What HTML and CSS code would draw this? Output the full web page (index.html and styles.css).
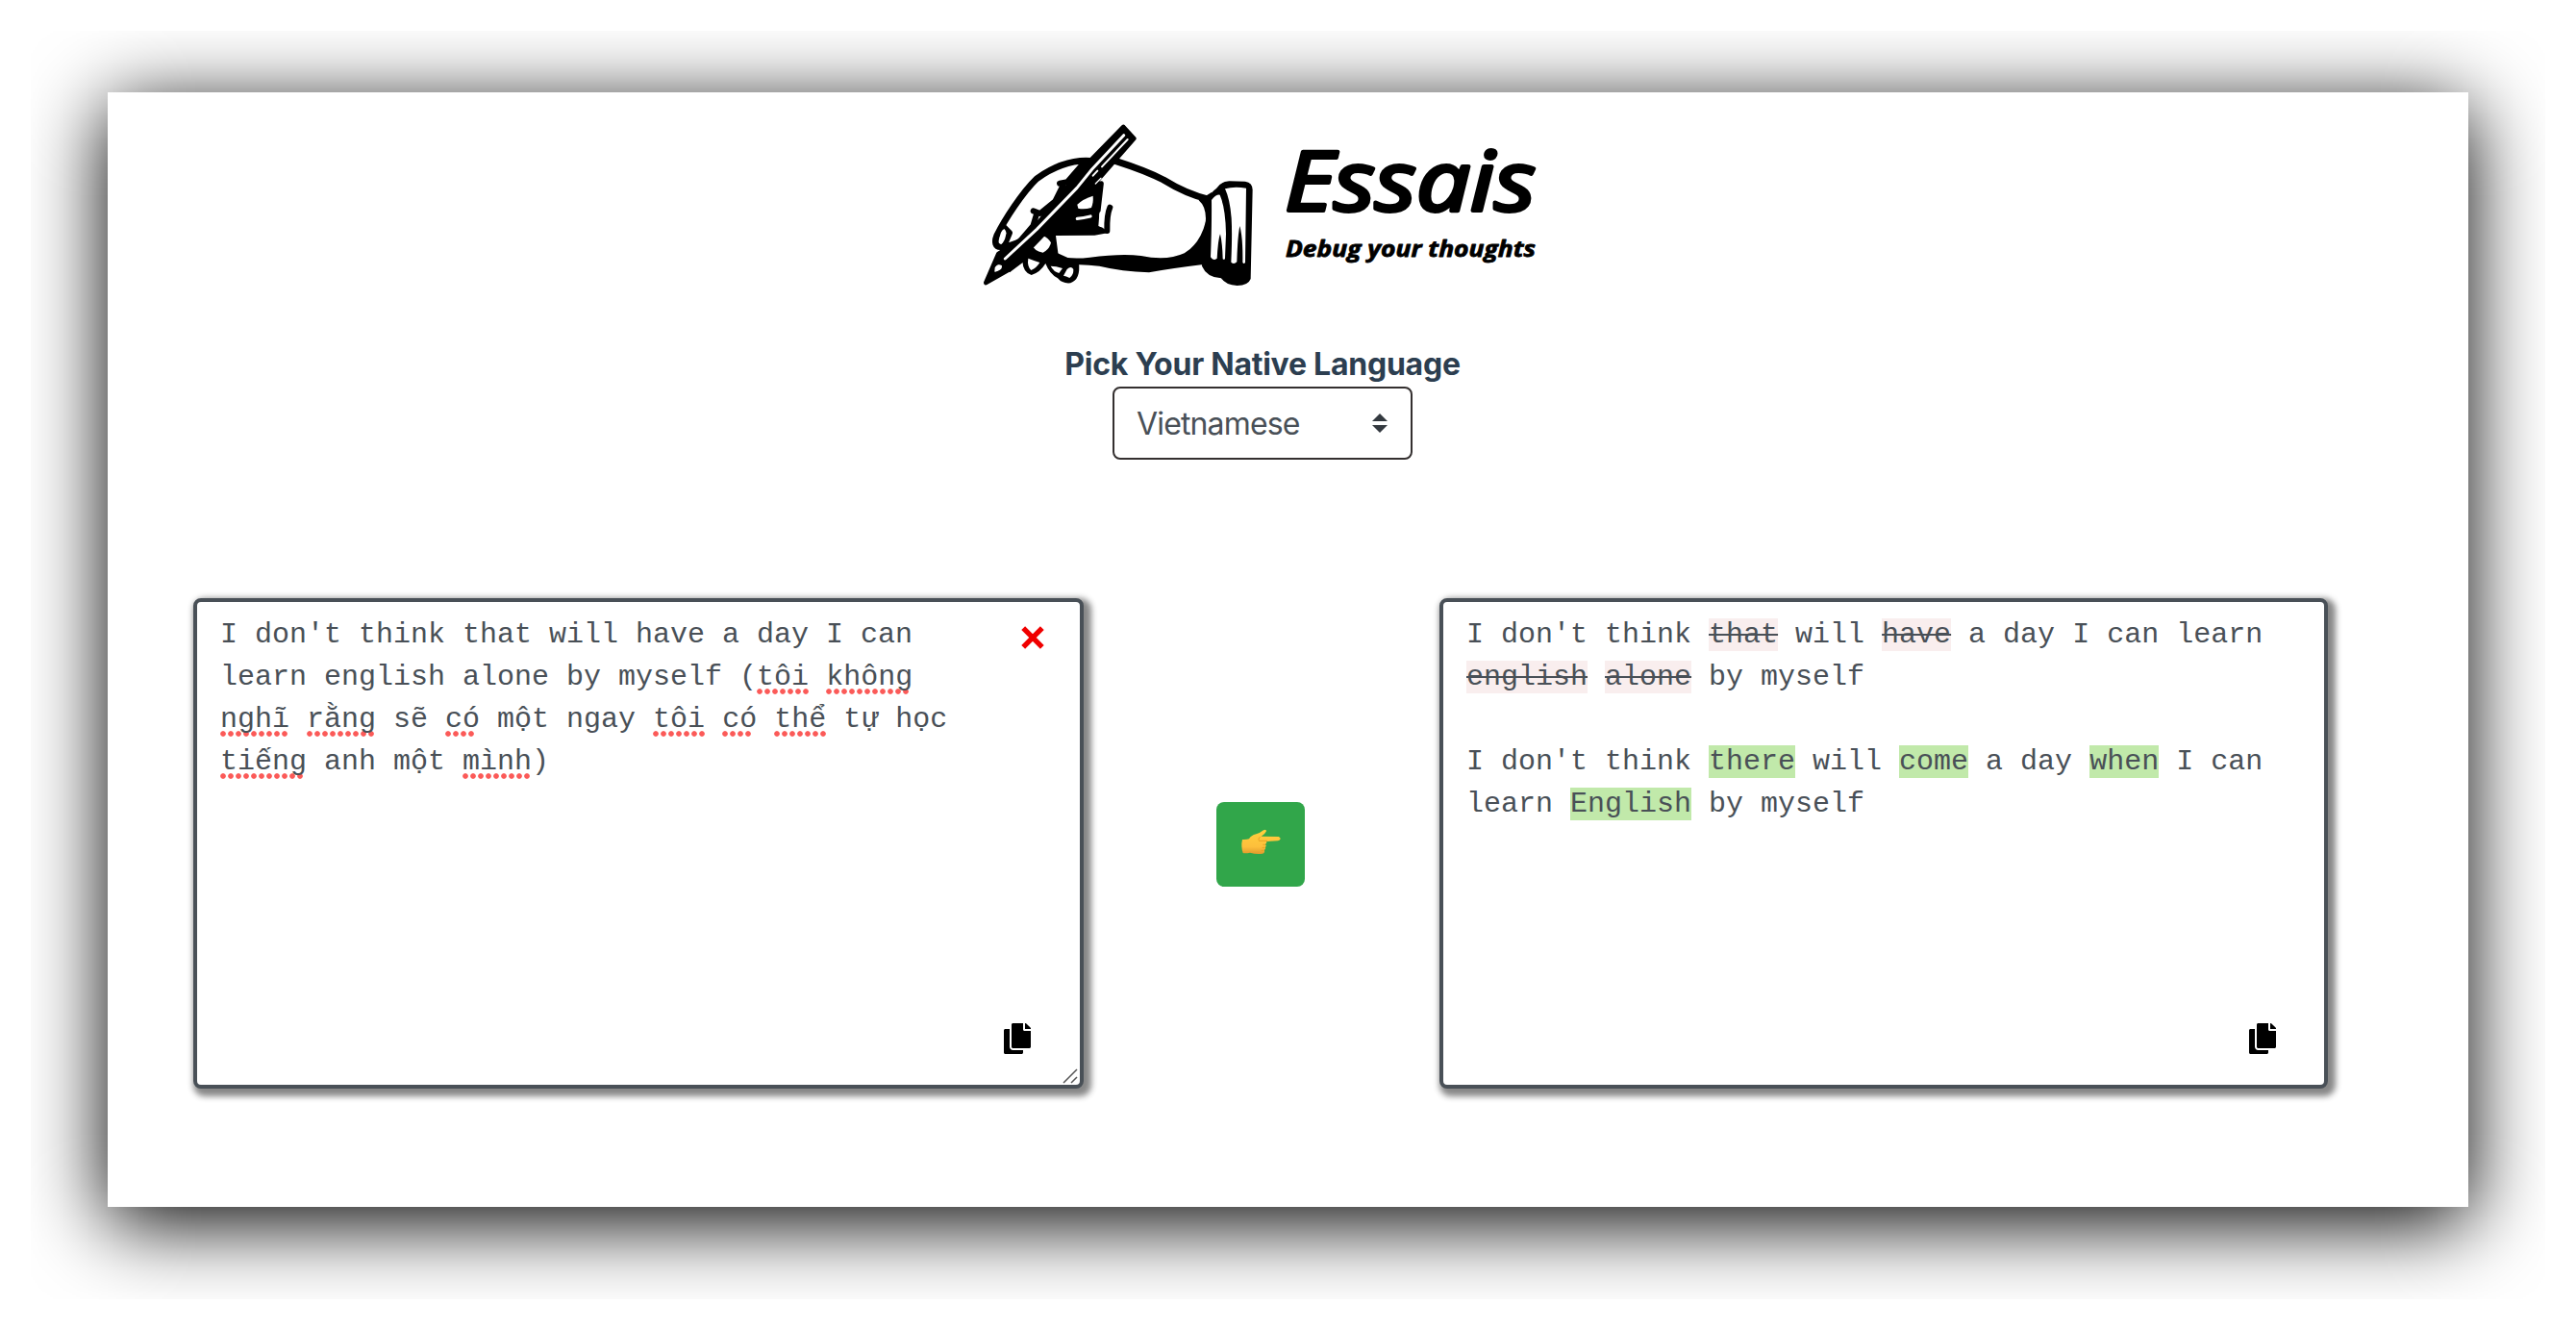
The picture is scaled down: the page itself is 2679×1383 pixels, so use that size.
FILE: index.html
```html
<!DOCTYPE html>
<html lang="en">
<head>
<meta charset="utf-8">
<title>Essais</title>
<link rel="stylesheet" href="styles.css">
</head>
<body>
<div class="frame">
  <main class="window">
    <header class="logo">
      <svg width="600" height="190" viewBox="0 0 600 190" role="img" aria-label="Essais">
        <g transform="scale(.33333)" stroke-linejoin="round" stroke-linecap="round">
          <!-- back of the hand -->
          <path d="M75 380C95 335 160 240 200 197C245 160 310 135 372 141L455 143C500 155 560 180 610 206C660 240 690 250 735 260V450C650 470 590 480 540 480C460 480 400 455 330 460L260 400L190 370L110 410Q70 405 75 380Z" fill="#fff"/>
          <path d="M372 142C310 138 250 165 205 197C160 240 105 325 80 375C72 395 75 412 95 410" fill="none" stroke="#000" stroke-width="20"/>
          <path d="M450 142C500 158 560 180 600 201C650 232 690 250 742 262" fill="none" stroke="#000" stroke-width="21"/>
          <!-- knuckles and finger shading -->
          <path d="M350 150L300 208L276 212M290 212L262 268L215 306L194 298M205 305L193 345L150 395L100 412M104 350L120 366L104 405" fill="none" stroke="#000" stroke-width="18"/>
          <path d="M350 155L385 190L410 215L404 260L397 345L410 350L430 366L385 374L264 375L272 436L200 435L160 460L120 490L90 420L150 398L205 330L270 262L300 210Z" fill="#000"/>
          <path d="M433 287Q423 310 424 360" fill="none" stroke="#000" stroke-width="18"/>
          <path d="M405 213L395 300" fill="none" stroke="#000" stroke-width="17"/>
          <path d="M331 278Q350 260 380 251Q382 272 375 288Q352 294 334 290Z" fill="#fff"/>
          <path d="M331 322Q350 321 372 315M405 305V343" fill="none" stroke="#fff" stroke-width="10"/>
          <!-- wrist shadow -->
          <path d="M270 438Q310 450 370 443Q470 430 530 438Q610 455 665 430Q715 400 732 330Q734 285 710 265L750 240L760 480L718 466Q620 478 555 490Q470 487 400 470Q340 462 300 468Z" fill="#000"/>
          <!-- curled fingers -->
          <path d="M160 455Q162 490 188 498Q215 490 232 462Q245 495 270 508Q285 526 310 523Q342 512 336 460L270 430L180 430Z" fill="#000"/>
          <path d="M189 401Q196 376 225 376Q240 382 249 397Q244 418 224 428Q194 422 189 401Z" fill="#fff"/>
          <path d="M178 446Q196 453 214 459Q205 475 187 483Q174 470 178 446ZM248 470Q265 470 285 477L274 492Q258 488 248 470ZM299 480Q312 468 319 480Q320 498 307 507Q296 501 288 500Z" fill="#fff"/>
          <path d="M88 390Q90 360 103 354Q112 362 108 374Q105 392 94 402Q86 400 88 390Z" fill="#fff"/>
          <!-- pen -->
          <path d="M475 36L508 72L392 205L240 355L120 480L46 522L85 432L180 372L300 225L376 137Z" fill="#000" stroke="#000" stroke-width="14"/>
          <path d="M476 62L377 168L330 226L205 355L106 447" fill="none" stroke="#fff" stroke-width="9"/>
          <path d="M488 75L408 160M394 173L380 188" fill="none" stroke="#fff" stroke-width="6"/>
          <path d="M405 196L388 213" fill="none" stroke="#fff" stroke-width="4"/>
          <path d="M76 475Q84 463 94 470Q95 482 75 486Z" fill="#fff" stroke="#fff" stroke-width="4"/>
          <!-- cuff -->
          <path d="M735 262Q750 238 765 228Q778 206 805 205L855 206Q878 210 878 232L872 510Q865 530 830 531Q795 530 780 508Q735 505 720 470L728 400Z" fill="#000"/>
          <path d="M750 264Q764 246 776 248Q794 290 795 370L792 446Q790 452 785 448Q784 400 777 370Q770 390 767 446Q755 455 747 442Q751 340 750 264Z" fill="#fff"/>
          <path d="M792 229Q820 220 858 227L855 459Q850 465 847 458Q848 380 838 345Q831 380 829 457Q820 466 811 458Q815 370 812 320Q807 260 792 229Z" fill="#fff"/>
        </g>
        <text class="logo-name" x="326" y="99" textLength="261" lengthAdjust="spacingAndGlyphs">Essais</text>
        <text class="logo-tag" x="327" y="147" textLength="260" lengthAdjust="spacingAndGlyphs">Debug your thoughts</text>
      </svg>
    </header>

    <section class="language">
      <h1 class="language-title">Pick Your Native Language</h1>
      <div class="select">
        <span class="select-value">Vietnamese</span>
        <svg class="select-arrows" width="16" height="20" viewBox="0 0 4 5"><path fill="#343a40" d="M2 0L0 2h4zm0 5L0 3h4z"/></svg>
      </div>
    </section>

    <section class="editor">
      <div class="box source">
        <p class="text">I don't think that will have a day I can<br>learn english alone by myself (<span class="typo n7">tôi</span> <span class="typo n11">không</span><br><span class="typo n9">nghĩ</span> <span class="typo n9">rằng</span> sẽ <span class="typo n4">có</span> một ngay <span class="typo n7">tôi</span> <span class="typo n4">có</span> <span class="typo n7">thể</span> tự học<br><span class="typo n11">tiếng</span> anh một <span class="typo n9">mình</span>)</p>
        <svg class="clear" width="24" height="24" viewBox="0 0 24 24"><path d="M2.200 2.200L21.800 21.800M21.800 2.200L2.200 21.800" stroke="#f00000" stroke-width="5.400"/></svg>
        <svg class="copy" width="28" height="32" viewBox="0 0 448 512"><path d="M320 448v40c0 13.255-10.745 24-24 24H24c-13.255 0-24-10.745-24-24V120c0-13.255 10.745-24 24-24h72v296c0 30.879 25.121 56 56 56h168zm0-344V0H152c-13.255 0-24 10.745-24 24v368c0 13.255 10.745 24 24 24h272c13.255 0 24-10.745 24-24V128H344c-13.200 0-24-10.800-24-24zm120.971-31.029L375.029 7.029A24 24 0 0 0 358.059 0H352v96h96v-6.059a24 24 0 0 0-7.029-16.970z"/></svg>
        <svg class="grip" width="16" height="16" viewBox="0 0 16 16"><path d="M1 15L15 1M9 15L15 9" stroke="#555" stroke-width="1.500"/></svg>
      </div>

      <button class="go" aria-label="Check">
        <svg width="42" height="28" viewBox="0 0 126 84">
          <defs><linearGradient id="skin" x1="0" y1="0" x2="0" y2="1"><stop offset="0" stop-color="#ffd03c"/><stop offset=".7" stop-color="#fdbf3c"/><stop offset="1" stop-color="#e09a2c"/></linearGradient></defs>
          <path fill="url(#skin)" d="M6 36Q18 37 27 34Q33 23 49 19Q61 16 72 7Q81 2 81 10Q78 18 65 26L119 27Q125 29 125 34Q124 39 117 40L82 42Q83 47 78 51Q83 55 78 60Q80 65 75 69Q77 78 69 80Q50 83 30 77Q16 80 8 78Q1 57 6 36Z"/>
          <path fill="none" stroke="#e39b1f" stroke-width="2.500" d="M62 27Q55 33 57 38M57 40H84M70 52H78M68 61H77M65 70H74"/>
        </svg>
      </button>

      <div class="box result">
        <p class="text">I don't think <del>that</del> will <del>have</del> a day I can learn<br><del>english</del> <del>alone</del> by myself<br><br>I don't think <ins>there</ins> will <ins>come</ins> a day <ins>when</ins> I can<br>learn <ins>English</ins> by myself</p>
        <svg class="copy" width="28" height="32" viewBox="0 0 448 512"><path d="M320 448v40c0 13.255-10.745 24-24 24H24c-13.255 0-24-10.745-24-24V120c0-13.255 10.745-24 24-24h72v296c0 30.879 25.121 56 56 56h168zm0-344V0H152c-13.255 0-24 10.745-24 24v368c0 13.255 10.745 24 24 24h272c13.255 0 24-10.745 24-24V128H344c-13.200 0-24-10.800-24-24zm120.971-31.029L375.029 7.029A24 24 0 0 0 358.059 0H352v96h96v-6.059a24 24 0 0 0-7.029-16.970z"/></svg>
      </div>
    </section>
  </main>
</div>
</body>
</html>
```

FILE: styles.css
```css
* { box-sizing: border-box; }

body {
  margin: 0;
  padding: 32px;
  background: #fff;
  color: #495057;
}

.frame {
  width: 2615px;
  height: 1319px;
  padding: 64px 80px 96px;
  overflow: hidden;
}

.window {
  display: flex;
  flex-direction: column;
  height: 1159px;
  padding: 24px 146px 0 89px;
  background: #fff;
  box-shadow: 0 16px 80px #000;
}

.logo {
  height: 190px;
  padding-left: 809px;
}

.logo svg { display: block; }

.logo-name {
  font: italic 500 86px "Open Sans", sans-serif;
  stroke: #000;
  stroke-width: 4px;
  stroke-linejoin: round;
}

.logo-tag {
  font: italic 700 24px "Open Sans", sans-serif;
  stroke: #000;
  stroke-width: .8px;
  stroke-linejoin: round;
}

.language {
  display: flex;
  flex-direction: column;
  align-items: center;
  width: 410px;
  margin: 44px 0 0 907px;
}

.language-title {
  height: 48px;
  margin: 0;
  color: #2c3e50;
  font: 700 32px/50px Inter, sans-serif;
  letter-spacing: -.25px;
  white-space: nowrap;
}

.select {
  display: flex;
  align-items: center;
  justify-content: space-between;
  width: 312px;
  height: 76px;
  padding: 0 24px 0 23px;
  border: 2px solid #343030;
  border-radius: 8px;
  font: 400 32px/48px Inter, sans-serif;
  letter-spacing: -.85px;
}

.select-value { padding-top: 2px; }

.editor {
  display: grid;
  grid-template-columns: 926px 92px 924px;
  justify-content: space-between;
  align-items: start;
  margin-top: 144px;
}

.box {
  position: relative;
  isolation: isolate;
  height: 510px;
  padding: 12px 24px;
  border: 4px solid #495057;
  border-radius: 8px;
  background: #fff;
  box-shadow: 4px 4px 6px 4px #888;
}

.text {
  margin: 0;
  font: 30px/44px "Liberation Mono", monospace;
  white-space: nowrap;
}

del { background: #f9eeee; text-decoration-thickness: 2px; }
ins { background: #c1e9aa; text-decoration: none; }

.typo { position: relative; }

/* spelling dots, whole dots only */
.typo::after {
  content: "";
  position: absolute;
  z-index: -1;
  left: 0;
  bottom: -1px;
  height: 6px;
  background: radial-gradient(circle at 3px 3px, #fb5a58 2.400px, transparent 3.200px) 0 0 / 8px 6px repeat-x;
}

.n4::after { width: 32px; }
.n7::after { width: 56px; }
.n9::after { width: 72px; }
.n11::after { width: 88px; }

.clear { position: absolute; top: 25px; right: 37px; }
.copy { position: absolute; right: 50px; bottom: 32px; }
.source .copy { right: 51px; }
.grip { position: absolute; right: 2px; bottom: 1px; }

.go {
  display: flex;
  align-items: center;
  justify-content: center;
  height: 88px;
  margin: 212px 1px 0 -1px;
  padding: 0 0 6px;
  border: 0;
  border-radius: 8px;
  background: #31a64a;
}
```
